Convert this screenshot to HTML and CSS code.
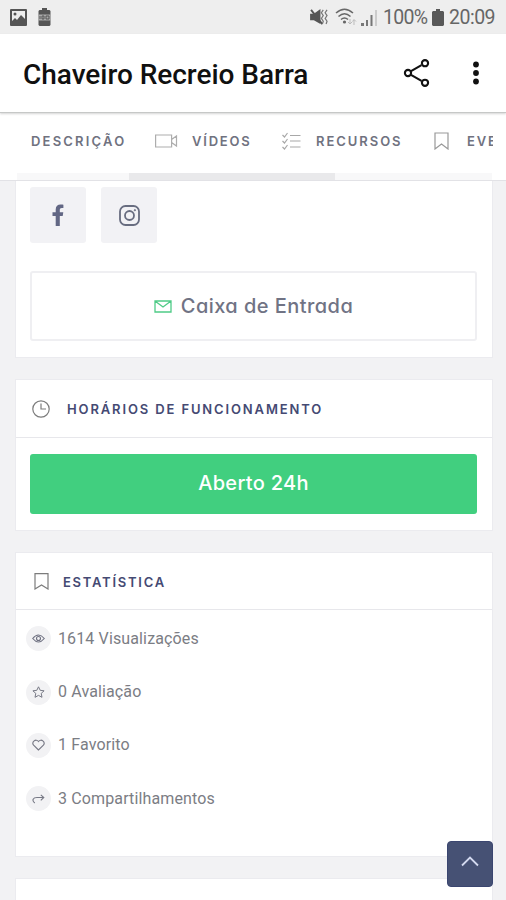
FILE: index.html
```html
<!DOCTYPE html>
<html lang="pt-BR">
<head>
<meta charset="utf-8">
<meta name="viewport" content="width=device-width, initial-scale=1">
<title>Chaveiro Recreio Barra</title>
<link rel="stylesheet" href="styles.css">
</head>
<body>
<div class="screen">
  <div class="status">
    <svg class="st-image" width="17" height="17" viewBox="0 0 17 17"><path fill="#555" fill-rule="evenodd" d="M1 0h15a1 1 0 0 1 1 1v15a1 1 0 0 1-1 1H1a1 1 0 0 1-1-1V1a1 1 0 0 1 1-1zM2 2v10l3-3 2 2 4-5 4 4V2z"/><circle cx="5" cy="5" r="1.500" fill="#555"/></svg>
    <svg class="st-batt" width="13" height="18" viewBox="0 0 13 18"><path fill="#555" d="M4 0h5v2h2.500l1 1v14l-1 1h-10l-1-1V3l1-1H4z"/><path fill="#aaa" d="M0 6.500h13v6H0z"/><path d="M2 8v3M4 8h2v3H4zM8 8h3v3H8z" fill="none" stroke="#555"/></svg>
    <span class="grow"></span>
    <svg class="st-mute" width="19" height="16" viewBox="0 0 20 17"><path fill="#555" d="M0 5h4l7-5v16l-7-4H0z"/><path d="M1 1l12 15" stroke="#555" stroke-width="2"/><path d="M14 1l-2 3 2 3-2 3 2 3-1 3M18 1l-2 3 2 3-2 3 2 3-1 3" fill="none" stroke="#777" stroke-width="1.300"/></svg>
    <svg class="st-wifi" width="22" height="18" viewBox="0 0 22 18"><g fill="none" stroke="#686868" stroke-width="1.500"><path d="M1 5q8.500-7.500 17 0M3.500 8.500q6-5.500 12 0M6 11.500q3.500-3 7 0"/></g><circle cx="9.500" cy="14" r="1.600" fill="#666"/><path d="M15 11v5M13 14l2 2 2-2M19 17v-5M17.500 13.500l1.500-2 2 2" fill="none" stroke="#bbb"/></svg>
    <svg class="st-sig" width="18" height="17" viewBox="0 0 18 17"><path fill="#777" d="M0 14h3v3H0zM5 11h2v6H5zM9.500 6h2v11h-2z"/><path fill="#ccc" d="M14 1h2v16h-2z"/></svg>
    <span class="pct">100%</span>
    <svg class="st-full" width="12" height="17" viewBox="0 0 12 17"><path fill="#585858" d="M4 0h4v2h3l1 1v13l-1 1H1l-1-1V3l1-1h3z"/></svg>
    <span class="clock">20:09</span>
  </div>

  <header class="appbar">
    <h1>Chaveiro Recreio Barra</h1>
    <svg class="share" width="28" height="30" viewBox="0 0 28 30" fill="none" stroke="#111" stroke-width="2.100"><path d="M8 13.200l10.500-6M8 16.800l10.500 6"/><circle cx="5" cy="15" r="3.100"/><circle cx="22" cy="5.200" r="3.100"/><circle cx="22" cy="24.800" r="3.100"/></svg>
    <svg class="more" width="8" height="24" viewBox="0 0 8 24" fill="#111"><circle cx="4" cy="3.500" r="2.900"/><circle cx="4" cy="12" r="2.900"/><circle cx="4" cy="20.500" r="2.900"/></svg>
  </header>

  <nav class="tabs">
    <div class="tablist">
      <span class="tab t1">DESCRIÇÃO</span>
      <svg class="i-video" width="23" height="14" viewBox="0 0 23 14" fill="none" stroke="#adadad" stroke-width="1.200"><path d="M.6 1h16v12H.6zM16.600 5.500L21.500 2v10l-4.900-3.500"/></svg>
      <span class="tab t2">VÍDEOS</span>
      <svg class="i-list" width="19" height="18" viewBox="0 0 19 18" fill="none" stroke="#a8a8a8" stroke-width="1.200"><path d="M.5 3l2 2L5.500 1M.5 9l2 2 3-4M.5 15l2 2 3-4M8 3.500h10.500M8 9h10.500M8 15h10.500"/></svg>
      <span class="tab t3">RECURSOS</span>
      <svg class="i-mark" width="15" height="18" viewBox="0 0 15 18" fill="none" stroke="#999" stroke-width="1.200"><path d="M1 1h13v16l-6.500-5L1 17z"/></svg>
      <span class="tab t4">EVE</span>
    </div>
    <div class="track"><div class="thumb"></div></div>
  </nav>

  <main>
    <section class="card contact">
      <div class="social">
        <a class="tile"><svg width="13" height="22" viewBox="0 0 13 22"><path fill="#626784" d="M3.700 22v-10H.5V8.300h3.200V5.500C3.700 2.200 5.600.5 8.600.5c1.500 0 2.800.2 2.800.2v3.200H9.800c-1.500 0-2 .9-2 1.900v2.500h3.500l-.6 3.700H7.800v10z"/></svg></a>
        <a class="tile"><svg width="21" height="21" viewBox="0 0 21 21" fill="none" stroke="#686d80" stroke-width="1.800"><rect x="1" y="1" width="19" height="19" rx="5.500"/><circle cx="10.500" cy="10.500" r="4.500"/><circle cx="15.900" cy="5.200" r=".7" fill="#686d80" stroke-width=".8"/></svg></a>
      </div>
      <a class="inbox"><svg width="18" height="13" viewBox="0 0 18 13" fill="none" stroke="#4fcb87" stroke-width="1.300"><path d="M1 1h16v11H1zM1 1l8 6 8-6"/></svg><span>Caixa de Entrada</span></a>
    </section>

    <section class="card hours">
      <div class="head"><svg width="18" height="18" viewBox="0 0 18 18" fill="none" stroke="#7c7c7c" stroke-width="1.200"><circle cx="9" cy="9" r="8.200"/><path d="M9 3.500V9h5"/></svg><h2>HORÁRIOS DE FUNCIONAMENTO</h2></div>
      <div class="open">Aberto 24h</div>
    </section>

    <section class="card stats">
      <div class="head"><svg width="15" height="17" viewBox="0 0 15 17" fill="none" stroke="#7c7c7c" stroke-width="1.200"><path d="M1 .7h13V16l-6.500-4L1 16z"/></svg><h2>ESTATÍSTICA</h2></div>
      <ul>
        <li><i><svg width="13" height="9" viewBox="0 0 13 9" fill="none" stroke="#6e7080" stroke-width="1.100"><path d="M.7 4.500q5.800-7 11.600 0-5.800 7-11.600 0z"/><circle cx="6.500" cy="4.500" r="2"/></svg></i><span>1614 Visualizações</span></li>
        <li><i><svg width="13" height="12" viewBox="0 0 13 12" fill="none" stroke="#777985"><path d="M6.500.8l1.700 3.500 3.900.5-2.900 2.600.8 3.900-3.500-1.900L3 11.300l.8-3.900L.9 4.800l3.900-.5z"/></svg></i><span>0 Avaliação</span></li>
        <li><i><svg width="13" height="12" viewBox="0 0 13 12" fill="none" stroke="#777985" stroke-width="1.100"><path d="M6.500 11L1.600 6.200C-.8 3.200 3.800-1 6.500 2.500 9.200-1 13.800 3.200 11.400 6.200z"/></svg></i><span>1 Favorito</span></li>
        <li><i><svg width="13" height="10" viewBox="0 0 13 10" fill="none" stroke="#777985" stroke-width="1.100"><path d="M2.800 9C-.5 6.500 1 3.500 5 3.500h6.500M8.800.8l3 2.700-3 2.800"/></svg></i><span>3 Compartilhamentos</span></li>
      </ul>
    </section>

    <section class="card next"></section>
  </main>
  <a class="totop"><svg width="18" height="11" viewBox="0 0 18 11" fill="none" stroke="#d3d9ef" stroke-width="1.800"><path d="M1 9.500l8-8 8 8"/></svg></a>
</div>
</body>
</html>
```
FILE: styles.css
```css
* { box-sizing: border-box; }
body { margin: 0; background: #f2f2f4; overflow: hidden; }
svg { display: block; flex: none; }
h1, h2, ul { margin: 0; padding: 0; }
.screen { position: relative; width: 506px; height: 900px; overflow: hidden; display: flex; flex-direction: column; }

.status { height: 34px; flex: none; background: #eee; display: flex; align-items: center; padding: 0 10px; font: 400 19.5px/34px Roboto, sans-serif; color: #666; white-space: nowrap; }
.st-batt { margin-left: 11px; }
.grow { flex: 1; }
.st-wifi { margin-left: 6px; }
.st-sig { margin-left: 4px; margin-top: 1px; }
.pct { width: 44px; margin: 2px 0 0 4px; letter-spacing: -0.7px; }
.st-full { margin-left: 5px; }
.clock { width: 47px; margin: 2px 0 0 5px; letter-spacing: -0.5px; }

.appbar { height: 79px; flex: none; background: #fff; display: flex; align-items: center; padding: 0 26px 0 23px; border-bottom: 1px solid #c6c8c7; box-shadow: 0 1px 2px #d5d5d5; position: relative; z-index: 1; }
.appbar h1 { flex: 1; font: 500 28px/36px Roboto, sans-serif; color: #101010; white-space: nowrap; padding-top: 3px; letter-spacing: -0.03px; }
.share { margin-right: 41px; }

.tabs { height: 68px; flex: none; background: #fff; border-bottom: 1px solid #e2e2e6; display: flex; flex-direction: column; }
.tablist { height: 60px; margin: 0 13px 0 31px; display: flex; align-items: center; overflow: hidden; padding-bottom: 4px; }
.tab { flex: none; font: 600 13px/20px Inter, sans-serif; letter-spacing: 1.8px; color: #70727f; white-space: nowrap; }
.t1 { width: 124px; letter-spacing: 2.2px; }
.t2 { width: 67px; margin-left: 14px; }
.i-list { margin-left: 23px; }
.t3 { width: 92px; margin-left: 15px; letter-spacing: 1.95px; }
.i-mark { margin-left: 26px; }
.t4 { margin-left: 18px; }
.track { height: 7px; margin: 0 14px 0 17px; background: #f8f8f9; }
.thumb { width: 206px; height: 7px; margin-left: 112px; background: #e9e9eb; }

main { display: flex; flex-direction: column; gap: 21px; padding: 0 13px 0 15px; }
.card { background: #fff; border: 1px solid #ebebef; flex: none; }
.contact { height: 177px; border-top: 0; padding: 6px 15px 0 14px; }
.social { display: flex; gap: 15px; }
.tile { width: 56px; height: 56px; border-radius: 3px; background: #f2f2f5; display: flex; align-items: center; justify-content: center; }
.inbox { height: 70px; margin-top: 28px; border: 2px solid #efeff2; border-radius: 3px; display: flex; align-items: center; justify-content: center; gap: 9px; font: 500 20px/30px Inter, sans-serif; font-feature-settings: "cv11"; color: #707384; letter-spacing: .45px; }

.head { height: 57px; border-bottom: 1px solid #e7e7eb; display: flex; align-items: center; padding-left: 16px; }
.head h2 { font: 600 13px/20px Inter, sans-serif; letter-spacing: 1.87px; color: #454a73; margin-left: 17px; white-space: nowrap; }
.hours { height: 152px; }
.hours .head { height: 58px; }
.open { height: 60px; margin: 16px 15px 0 14px; border-radius: 3px; background: #41cf7f; color: #fff; text-align: center; font: 500 20px/59px Inter, sans-serif; letter-spacing: .3px; }
.stats { height: 305px; }
.stats .head { padding-left: 18px; }
.stats .head h2 { margin-left: 14px; letter-spacing: 1.75px; padding-top: 1px; }
ul { list-style: none; padding: 2px 0 0 10px; }
li { display: flex; align-items: center; height: 53.4px; font: 400 16px/24px Roboto, sans-serif; letter-spacing: .13px; color: #7b7d84; }
i { width: 25px; height: 25px; border-radius: 50%; background: #f2f2f4; display: flex; align-items: center; justify-content: center; margin-right: 7px; }
.next { height: 60px; }
.totop { position: absolute; left: 447px; top: 841px; width: 46px; height: 46px; border-radius: 4px; background: #465174; border: 1px solid #3b4670; display: flex; align-items: center; justify-content: center; padding-bottom: 5px; }
```
